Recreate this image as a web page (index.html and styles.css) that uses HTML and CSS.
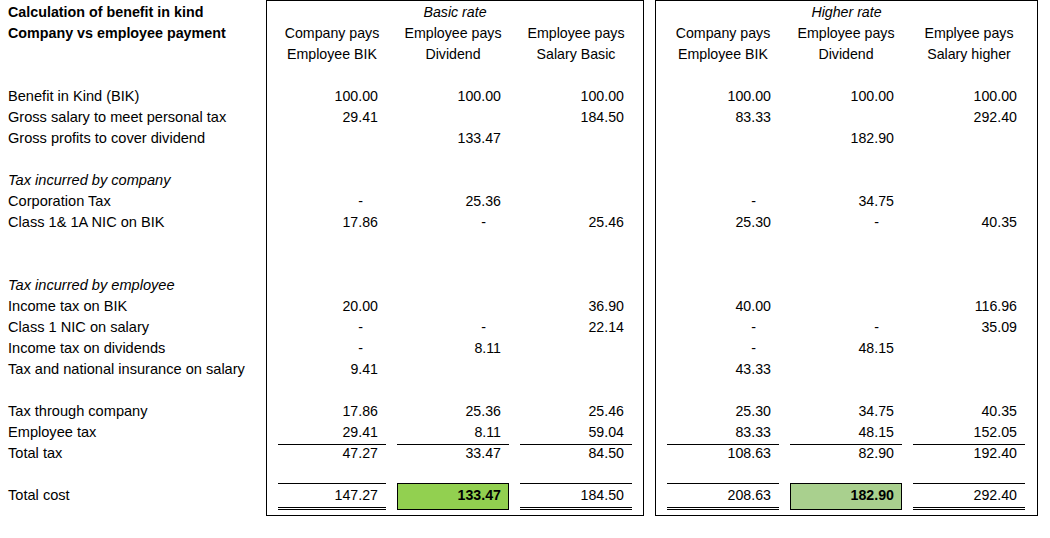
FILE: index.html
```html
<!DOCTYPE html>
<html>
<head>
<meta charset="utf-8">
<link rel="stylesheet" href="styles.css">
</head>
<body>
<div class="sheet">
  <div class="labels">
    <div class="row b">Calculation of benefit in kind</div>
    <div class="row b">Company vs employee payment</div>
    <div class="row"></div>
    <div class="row"></div>
    <div class="row">Benefit in Kind (BIK)</div>
    <div class="row">Gross salary to meet personal tax</div>
    <div class="row">Gross profits to cover dividend</div>
    <div class="row"></div>
    <div class="row i">Tax incurred by company</div>
    <div class="row">Corporation Tax</div>
    <div class="row">Class 1&amp; 1A NIC on BIK</div>
    <div class="row"></div>
    <div class="row"></div>
    <div class="row i">Tax incurred by employee</div>
    <div class="row">Income tax on BIK</div>
    <div class="row">Class 1 NIC on salary</div>
    <div class="row">Income tax on dividends</div>
    <div class="row">Tax and national insurance on salary</div>
    <div class="row"></div>
    <div class="row">Tax through company</div>
    <div class="row">Employee tax</div>
    <div class="row">Total tax</div>
    <div class="row"></div>
    <div class="row last">Total cost</div>
  </div>

  <div class="box box-basic">
    <div class="row title i">Basic rate</div>
    <div class="row"><span class="h">Company pays</span><span class="h">Employee pays</span><span class="h">Employee pays</span></div>
    <div class="row"><span class="h">Employee BIK</span><span class="h">Dividend</span><span class="h">Salary Basic</span></div>
    <div class="row"></div>
    <div class="row"><span>100.00</span><span>100.00</span><span>100.00</span></div>
    <div class="row"><span>29.41</span><span></span><span>184.50</span></div>
    <div class="row"><span></span><span>133.47</span><span></span></div>
    <div class="row"></div>
    <div class="row"></div>
    <div class="row"><span class="d">-</span><span>25.36</span><span></span></div>
    <div class="row"><span>17.86</span><span class="d">-</span><span>25.46</span></div>
    <div class="row"></div>
    <div class="row"></div>
    <div class="row"></div>
    <div class="row"><span>20.00</span><span></span><span>36.90</span></div>
    <div class="row"><span class="d">-</span><span class="d">-</span><span>22.14</span></div>
    <div class="row"><span class="d">-</span><span>8.11</span><span></span></div>
    <div class="row"><span>9.41</span><span></span><span></span></div>
    <div class="row"></div>
    <div class="row"><span>17.86</span><span>25.36</span><span>25.46</span></div>
    <div class="row ul"><span>29.41</span><span>8.11</span><span>59.04</span></div>
    <div class="row"><span>47.27</span><span>33.47</span><span>84.50</span></div>
    <div class="row ul"><span></span><span></span><span></span></div>
    <div class="row last"><span class="dbl">147.27</span><span class="hl hl-basic">133.47</span><span class="dbl">184.50</span></div>
  </div>

  <div class="box box-higher">
    <div class="row title i">Higher rate</div>
    <div class="row"><span class="h">Company pays</span><span class="h">Employee pays</span><span class="h">Emplyee pays</span></div>
    <div class="row"><span class="h">Employee BIK</span><span class="h">Dividend</span><span class="h">Salary higher</span></div>
    <div class="row"></div>
    <div class="row"><span>100.00</span><span>100.00</span><span>100.00</span></div>
    <div class="row"><span>83.33</span><span></span><span>292.40</span></div>
    <div class="row"><span></span><span>182.90</span><span></span></div>
    <div class="row"></div>
    <div class="row"></div>
    <div class="row"><span class="d">-</span><span>34.75</span><span></span></div>
    <div class="row"><span>25.30</span><span class="d">-</span><span>40.35</span></div>
    <div class="row"></div>
    <div class="row"></div>
    <div class="row"></div>
    <div class="row"><span>40.00</span><span></span><span>116.96</span></div>
    <div class="row"><span class="d">-</span><span class="d">-</span><span>35.09</span></div>
    <div class="row"><span class="d">-</span><span>48.15</span><span></span></div>
    <div class="row"><span>43.33</span><span></span><span></span></div>
    <div class="row"></div>
    <div class="row"><span>25.30</span><span>34.75</span><span>40.35</span></div>
    <div class="row ul"><span>83.33</span><span>48.15</span><span>152.05</span></div>
    <div class="row"><span>108.63</span><span>82.90</span><span>192.40</span></div>
    <div class="row ul"><span></span><span></span><span></span></div>
    <div class="row last"><span class="dbl">208.63</span><span class="hl hl-higher">182.90</span><span class="dbl">292.40</span></div>
  </div>
</div>
</body>
</html>
```

FILE: styles.css
```css
* { box-sizing: border-box; }
html, body { margin: 0; padding: 0; background: #fff; }
body {
  font-family: "Liberation Sans", Arial, sans-serif;
  font-size: 14.2px;
  color: #000;
}
.sheet {
  display: flex;
  align-items: flex-start;
}
.labels {
  width: 266px;
  padding-top: 1px;
  padding-left: 8px;
  font-size: 14.6px;
}
.labels .b { font-size: 14.3px; }
.row {
  height: 21px;
  line-height: 23px;
  white-space: nowrap;
}
.row.last { height: 22px; line-height: 23px; }
.b { font-weight: bold; }
.i { font-style: italic; }

.box {
  border: 1px solid #000;
  padding: 0 11px 9px 11px;
}
.box-basic { width: 378px; }
.box-higher { width: 383px; margin-left: 11px; padding-right: 12px; }

.box .row {
  display: grid;
  column-gap: 11px;
}
.box-basic .row { grid-template-columns: 108px 112px 112px; }
.box-higher .row { grid-template-columns: 112px 112px 112px; }
.box .row.title {
  display: block;
  text-align: center;
  margin: 0 -11px;
}
.box-higher .row.title { margin-right: -12px; }

.box .row span {
  text-align: right;
  padding-right: 8px;
}
.box .row span.h {
  text-align: center;
  padding-right: 0;
}
.box .row span.d { padding-right: 23px; }
.box .row.ul span { border-bottom: 1px solid #000; }
.box .row span.dbl { border-bottom: 3px double #000; }
.box .row span.hl {
  font-weight: bold;
  border: 1px solid #000;
  border-top: 0;
  padding-right: 7px;
}
.hl-basic { background: #92d050; }
.hl-higher { background: #a9d08e; }
```
